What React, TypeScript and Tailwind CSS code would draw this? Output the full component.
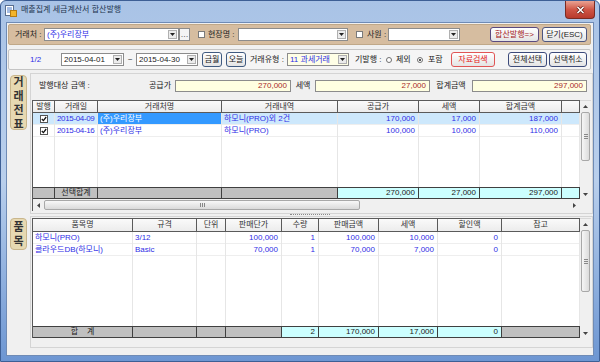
import React from 'react';

const FONT = "font-['Liberation_Sans','Noto_Sans_CJK_KR',sans-serif]";

type Dir = 'up' | 'down' | 'left' | 'right';

const Tri = ({ dir, color = '#222' }: { dir: Dir; color?: string }) => {
  if (dir === 'left' || dir === 'right') {
    return (
      <svg width="3" height="5" viewBox="0 0 3 5">
        <path d={dir === 'left' ? 'M3 0V5L0 2.5Z' : 'M0 0V5L3 2.5Z'} fill={color} />
      </svg>
    );
  }
  return (
    <svg width="5" height="3" viewBox="0 0 5 3">
      <path d={dir === 'down' ? 'M0 0H5L2.5 3Z' : 'M0 3H5L2.5 0Z'} fill={color} />
    </svg>
  );
};

const Combo = ({ w, text, cls = 'bg-white text-[#2e2ee6]' }: { w: string; text?: string; cls?: string }) => (
  <div className={`${w} h-[13px] shrink-0 border border-[#8c8c8c] flex items-stretch ${cls}`}>
    <div className="flex-1 pl-[2px] flex items-center whitespace-nowrap overflow-hidden leading-none">{text}</div>
    <div className="m-px w-[9px] bg-[#ececec] border border-[#b0b0b0] flex items-center justify-center">
      <Tri dir="down" />
    </div>
  </div>
);

const Btn = ({ w, h, children, cls = 'border-[#4d5680] text-[#222]' }: { w: string; h: string; children: React.ReactNode; cls?: string }) => (
  <div className={`${w} ${h} shrink-0 rounded-[3px] border bg-gradient-to-b from-[#ffffff] to-[#e4e4e4] flex items-center justify-center leading-none whitespace-nowrap ${cls}`}>
    {children}
  </div>
);

const Check = () => <div className="w-[7px] h-[7px] shrink-0 border border-[#7a7a7a] bg-white" />;

const Radio = ({ on }: { on?: boolean }) => (
  <div className="w-[6px] h-[6px] shrink-0 rounded-full border border-[#707070] bg-white flex items-center justify-center">
    {on && <div className="w-[2px] h-[2px] rounded-full bg-[#222]" />}
  </div>
);

const GridCheck = () => (
  <div className="w-[8px] h-[8px] border border-[#555] bg-white flex items-center justify-center">
    <svg width="6" height="6" viewBox="0 0 6 6">
      <path d="M0.8 3L2.4 4.6L5.2 1" stroke="#111" strokeWidth="1.3" fill="none" />
    </svg>
  </div>
);

const VTab = ({ chars, h }: { chars: string[]; h: string }) => (
  <div className={`ml-[3px] mt-[2px] w-[17px] ${h} rounded-[4px] border border-[#c9b68c] bg-[#e7d9b2] flex flex-col items-center justify-center text-[11px] font-bold leading-[14px] text-[#333]`}>
    {chars.map((c) => (
      <span key={c}>{c}</span>
    ))}
  </div>
);

const VScroll = ({ thumb }: { thumb: string }) => (
  <div className="w-[11px] h-full shrink-0 bg-[#f0f0f0] border-t border-[#d8d8d8] flex flex-col items-center">
    <div className="h-[11px] w-full flex items-center justify-center">
      <Tri dir="up" color="#444" />
    </div>
    <div className={`w-[9px] ${thumb} rounded-[2px] border border-[#a8a8a8] bg-gradient-to-r from-[#f6f6f6] to-[#dcdcdc] flex flex-col items-center justify-center gap-px`}>
      <div className="w-[4px] h-px bg-[#888]" />
      <div className="w-[4px] h-px bg-[#888]" />
      <div className="w-[4px] h-px bg-[#888]" />
    </div>
    <div className="flex-1" />
    <div className="h-[10px] w-full flex items-center justify-center">
      <Tri dir="down" color="#444" />
    </div>
  </div>
);

type Col = { w: string; t: string; a: string };

const g1Cols: Col[] = [
  { w: 'w-[22px]', t: '발행', a: 'justify-center' },
  { w: 'w-[43px]', t: '거래일', a: 'justify-start pl-[2px] tracking-[-0.35px]' },
  { w: 'w-[124px]', t: '거래처명', a: 'justify-start pl-[2px]' },
  { w: 'w-[116px]', t: '거래내역', a: 'justify-start pl-[2px]' },
  { w: 'w-[81px]', t: '공급가', a: 'justify-end pr-[3px]' },
  { w: 'w-[61px]', t: '세액', a: 'justify-end pr-[3px]' },
  { w: 'w-[82px]', t: '합계금액', a: 'justify-end pr-[3px]' },
  { w: 'w-[18px]', t: '', a: 'justify-end' },
];

const g1Rows: React.ReactNode[][] = [
  [<GridCheck />, '2015-04-09', '(주)우리장부', '하모니(PRO)외 2건', '170,000', '17,000', '187,000', ''],
  [<GridCheck />, '2015-04-16', '(주)우리장부', '하모니(PRO)', '100,000', '10,000', '110,000', ''],
];

const g1Foot = [
  { t: '', c: 'bg-[#c0c0c0] justify-center' },
  { t: '선택합계', c: 'bg-[#c0c0c0] justify-center' },
  { t: '', c: 'bg-[#c0c0c0]' },
  { t: '', c: 'bg-[#c0c0c0]' },
  { t: '270,000', c: 'bg-[#ccffff] justify-end pr-[3px]' },
  { t: '27,000', c: 'bg-[#ccffff] justify-end pr-[3px]' },
  { t: '297,000', c: 'bg-[#ccffff] justify-end pr-[3px]' },
  { t: '', c: 'bg-[#ccffff]' },
];

const g2Cols: Col[] = [
  { w: 'w-[100px]', t: '품목명', a: 'justify-start pl-[2px]' },
  { w: 'w-[64px]', t: '규격', a: 'justify-start pl-[2px]' },
  { w: 'w-[29px]', t: '단위', a: 'justify-center' },
  { w: 'w-[56px]', t: '판매단가', a: 'justify-end pr-[3px]' },
  { w: 'w-[37px]', t: '수량', a: 'justify-end pr-[3px]' },
  { w: 'w-[60px]', t: '판매금액', a: 'justify-end pr-[3px]' },
  { w: 'w-[59px]', t: '세액', a: 'justify-end pr-[3px]' },
  { w: 'w-[64px]', t: '할인액', a: 'justify-end pr-[3px]' },
  { w: 'w-[78px]', t: '참고', a: 'justify-start pl-[2px]' },
];

const g2Rows: React.ReactNode[][] = [
  ['하모니(PRO)', '3/12', '', '100,000', '1', '100,000', '10,000', '0', ''],
  ['클라우드DB(하모니)', 'Basic', '', '70,000', '1', '70,000', '7,000', '0', ''],
];

const g2Foot = [
  { t: '합    계', c: 'bg-[#c0c0c0] justify-center whitespace-pre' },
  { t: '', c: 'bg-[#c0c0c0]' },
  { t: '', c: 'bg-[#c0c0c0]' },
  { t: '', c: 'bg-[#c0c0c0]' },
  { t: '2', c: 'bg-[#ccffff] justify-end pr-[3px]' },
  { t: '170,000', c: 'bg-[#ccffff] justify-end pr-[3px]' },
  { t: '17,000', c: 'bg-[#ccffff] justify-end pr-[3px]' },
  { t: '0', c: 'bg-[#ccffff] justify-end pr-[3px]' },
  { t: '', c: 'bg-[#c0c0c0]' },
];

const Table = ({
  cols,
  rows,
  foot,
  headH,
  bodyH,
  selRow,
  selCell,
}: {
  cols: Col[];
  rows: React.ReactNode[][];
  foot: { t: string; c: string }[];
  headH: string;
  bodyH: string;
  selRow?: number;
  selCell?: number;
}) => (
  <div className="w-[548px] shrink-0 border-l border-t border-[#5a5a5a] flex flex-col">
    <div className={`flex ${headH} border-b border-[#5a5a5a]`}>
      {cols.map((c, i) => (
        <div key={i} className={`${c.w} shrink-0 border-r border-[#5a5a5a] bg-gradient-to-b from-[#fafafa] to-[#ececec] flex items-center justify-center text-[#333] leading-none`}>
          {c.t}
        </div>
      ))}
    </div>
    <div className={`flex ${bodyH} bg-white`}>
      {cols.map((c, ci) => (
        <div key={ci} className={`${c.w} shrink-0 h-full border-r border-[#e6e6e6] flex flex-col`}>
          {rows.map((r, ri) => {
            const sel = ri === selRow;
            const cellSel = sel && ci === selCell;
            return (
              <div
                key={ri}
                className={`h-[12px] flex items-center whitespace-nowrap overflow-hidden leading-none border-b border-[#eeeeee] ${c.a} ${
                  cellSel ? 'bg-[#3399ff] text-white' : sel ? 'bg-[#cde8fc] text-[#2e2ee6]' : 'text-[#2e2ee6]'
                }`}
              >
                {r[ci]}
              </div>
            );
          })}
        </div>
      ))}
    </div>
    <div className="flex h-[12px] border-t border-b border-[#404040]">
      {cols.map((c, i) => (
        <div key={i} className={`${c.w} shrink-0 border-r border-[#404040] flex items-center leading-none text-[#222] ${foot[i].c}`}>
          {foot[i].t}
        </div>
      ))}
    </div>
  </div>
);

export default function App() {
  return (
    <div className={`${FONT} text-[8px] text-[#1a1a1a] w-[600px] h-[362px] overflow-hidden flex flex-col rounded-t-[6px] border border-[#3d5f95] bg-gradient-to-b from-[#a9c3e6] via-[#b9cfec] to-[#6d96d2]`}>
      {/* title bar */}
      <div className="h-[21px] shrink-0 flex items-start">
        <div className="mt-[4px] ml-[4px]">
          <svg width="12" height="12" viewBox="0 0 12 12">
            <rect x="0.5" y="0.5" width="8" height="10" fill="#fff" stroke="#5a6f8f" />
            <path d="M2 3h5M2 5h5M2 7h3" stroke="#4a7bc8" />
            <rect x="5.5" y="5.5" width="6" height="6" fill="#f2b42b" stroke="#b57a10" />
          </svg>
        </div>
        <div className="ml-[4px] mt-[5px] text-[8px] leading-none text-[#23364f]">매출집계 세금계산서 합산발행</div>
        <div className="ml-auto mr-[4px] w-[30px] h-[18px] rounded-b-[4px] border border-t-0 border-[#7a2b22] bg-gradient-to-b from-[#e8a293] via-[#cf5646] to-[#b83a2c] flex items-center justify-center">
          <svg width="9" height="8" viewBox="0 0 9 8">
            <path d="M1.5 1L7.5 7M7.5 1L1.5 7" stroke="#5a1a12" strokeWidth="3" />
            <path d="M1.5 1L7.5 7M7.5 1L1.5 7" stroke="#fff" strokeWidth="1.6" />
          </svg>
        </div>
      </div>

      {/* client area */}
      <div className="mx-[5px] mb-[5px] flex-1 bg-[#f0f0f0] border border-[#6f8bb5] flex flex-col">
        {/* filter bar */}
        <div className="ml-px mt-px w-[583px] h-[21px] rounded-[2px] border border-[#c0a888] bg-[#d6bda0] flex items-center">
          <div className="w-[6px]" />
          <div className="w-[29px] shrink-0 text-[#222]">거래처 :</div>
          <Combo w="w-[135px]" text="(주)우리장부" />
          <div className="w-[11px] h-[13px] shrink-0 border border-[#8c8c8c] bg-[#f4f4f4] flex items-center justify-center leading-none">…</div>
          <div className="w-[8px]" />
          <Check />
          <div className="w-[3px]" />
          <div className="w-[30px] shrink-0 text-[#222]">현장명 :</div>
          <Combo w="w-[110px]" />
          <div className="w-[8px]" />
          <Check />
          <div className="w-[4px]" />
          <div className="w-[21px] shrink-0 text-[#222]">사원 :</div>
          <Combo w="w-[72px]" />
          <div className="flex-1" />
          <Btn w="w-[49px]" h="h-[15px]" cls="border-[#5a4a80] text-[#a52222]">합산발행=&gt;</Btn>
          <div className="w-[3px]" />
          <Btn w="w-[45px]" h="h-[15px]">닫기(ESC)</Btn>
          <div className="w-[3px]" />
        </div>

        {/* search bar */}
        <div className="ml-px mt-[4px] w-[583px] h-[21px] rounded-[2px] border border-[#c4c4c4] bg-[#f5f5f5] flex items-center">
          <div className="w-[21px]" />
          <div className="w-[31px] shrink-0 text-[#2e2ee6]">1/2</div>
          <Combo w="w-[63px]" text="2015-04-01" cls="bg-white text-[#222]" />
          <div className="w-[12px] shrink-0 text-center">~</div>
          <Combo w="w-[62px]" text="2015-04-30" cls="bg-white text-[#222]" />
          <div className="w-[4px]" />
          <Btn w="w-[20px]" h="h-[15px]" cls="border-[#3f5a80] text-[#222]">금월</Btn>
          <div className="w-[4px]" />
          <Btn w="w-[20px]" h="h-[15px]" cls="border-[#3f5a80] text-[#222]">오늘</Btn>
          <div className="w-[4px]" />
          <div className="w-[37px] shrink-0 text-[#222] whitespace-nowrap">거래유형 :</div>
          <Combo w="w-[62px]" text="11 과세거래" cls="bg-[#ffffe6] text-[#2e2ee6]" />
          <div className="w-[6px]" />
          <div className="w-[31px] shrink-0 text-[#222] whitespace-nowrap">기발행 :</div>
          <Radio />
          <div className="w-[4px]" />
          <div className="w-[18px] shrink-0">제외</div>
          <div className="w-[3px]" />
          <Radio on />
          <div className="w-[5px]" />
          <div className="w-[18px] shrink-0">포함</div>
          <div className="w-[5px]" />
          <Btn w="w-[44px]" h="h-[15px]" cls="border-[#e05555] text-[#e42020]">자료검색</Btn>
          <div className="flex-1" />
          <Btn w="w-[39px]" h="h-[15px]" cls="border-[#3c4a7a] text-[#222]">전체선택</Btn>
          <div className="w-[2px]" />
          <Btn w="w-[38px]" h="h-[15px]" cls="border-[#3c4a7a] text-[#222]">선택취소</Btn>
          <div className="w-[3px]" />
        </div>

        {/* section 1 */}
        <div className="mt-[3px] flex">
          <VTab chars={['거', '래', '전', '표']} h="h-[55px]" />
          <div className="ml-[3px] w-[563px] h-[141px] border border-[#d4d4d4] flex flex-col">
            <div className="mt-[6px] h-[12px] flex items-center">
              <div className="ml-[8px] w-[105px] shrink-0 text-[#222]">발행대상 금액 :</div>
              <div className="w-[27px] shrink-0 text-right text-[#222]">공급가</div>
              <div className="w-[4px]" />
              <div className="w-[116px] h-[12px] border border-[#8c8c8c] bg-[#ffffe1] flex items-center justify-end pr-[3px] text-[#a82a2a]">270,000</div>
              <div className="w-[24px] shrink-0 text-center text-[#222]">세액</div>
              <div className="w-[115px] h-[12px] border border-[#8c8c8c] bg-[#ffffe1] flex items-center justify-end pr-[3px] text-[#a82a2a]">27,000</div>
              <div className="w-[42px] shrink-0 text-center text-[#222]">합계금액</div>
              <div className="w-[115px] h-[12px] border border-[#8c8c8c] bg-[#ffffe1] flex items-center justify-end pr-[3px] text-[#a82a2a]">297,000</div>
            </div>
            <div className="mt-[8px] ml-px w-[559px] flex flex-col">
              <div className="flex h-[99px]">
                <Table cols={g1Cols} rows={g1Rows} foot={g1Foot} headH="h-[12px]" bodyH="h-[74px]" selRow={0} selCell={2} />
                <VScroll thumb="h-[49px]" />
              </div>
              <div className="flex h-[12px]">
                <div className="w-[548px] shrink-0 border-l border-[#5a5a5a] bg-[#f0f0f0] flex items-center">
                  <div className="w-[11px] flex justify-center">
                    <Tri dir="left" color="#444" />
                  </div>
                  <div className="w-[316px] h-[10px] rounded-[2px] border border-[#a8a8a8] bg-gradient-to-b from-[#f8f8f8] to-[#dadada] flex items-center justify-center gap-px">
                    <div className="w-px h-[4px] bg-[#888]" />
                    <div className="w-px h-[4px] bg-[#888]" />
                    <div className="w-px h-[4px] bg-[#888]" />
                  </div>
                  <div className="flex-1" />
                  <div className="w-[11px] flex justify-center">
                    <Tri dir="right" color="#444" />
                  </div>
                </div>
                <div className="w-[11px] bg-[#f0f0f0]" />
              </div>
            </div>
          </div>
        </div>

        {/* splitter */}
        <div className="h-[2px] flex justify-center">
          <div className="ml-[20px] w-[40px] border-t border-dotted border-[#8a8a8a]" />
        </div>

        {/* section 2 */}
        <div className="flex">
          <VTab chars={['품', '목']} h="h-[32px]" />
          <div className="ml-[3px] w-[563px] h-[132px] border border-[#d4d4d4] flex flex-col">
            <div className="mt-px ml-px w-[559px] h-[120px] flex">
              <Table cols={g2Cols} rows={g2Rows} foot={g2Foot} headH="h-[13px]" bodyH="h-[94px]" />
              <VScroll thumb="h-[62px]" />
            </div>
          </div>
        </div>
      </div>
    </div>
  );
}
